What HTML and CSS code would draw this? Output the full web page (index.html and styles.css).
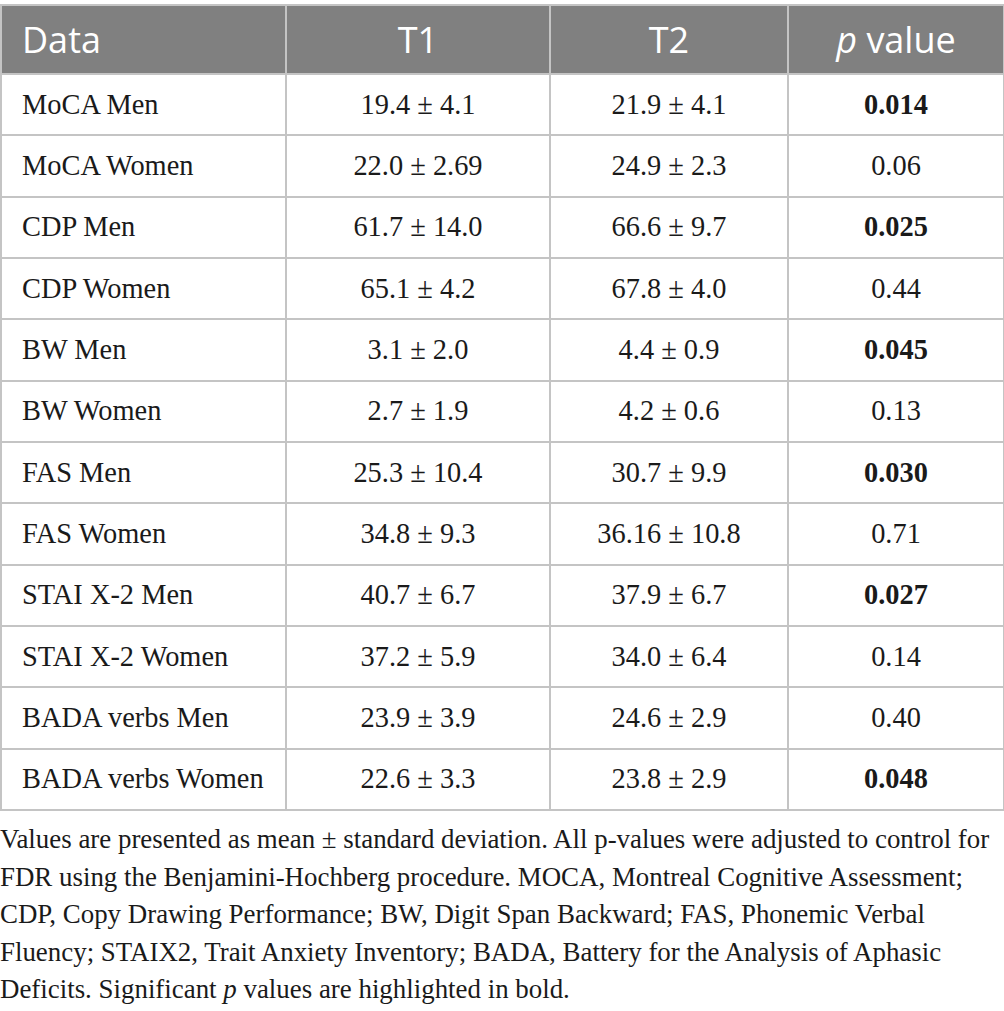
FILE: index.html
```html
<!DOCTYPE html>
<html>
<head>
<meta charset="utf-8">
<link rel="stylesheet" href="styles.css">
</head>
<body>
<table class="data-table">
  <colgroup>
    <col class="c1"><col class="c2"><col class="c3"><col class="c4">
  </colgroup>
  <thead>
    <tr><th class="left">Data</th><th>T1</th><th>T2</th><th><i>p</i> value</th></tr>
  </thead>
  <tbody>
    <tr><td class="left">MoCA Men</td><td>19.4 ± 4.1</td><td>21.9 ± 4.1</td><td><b>0.014</b></td></tr>
    <tr><td class="left">MoCA Women</td><td>22.0 ± 2.69</td><td>24.9 ± 2.3</td><td>0.06</td></tr>
    <tr><td class="left">CDP Men</td><td>61.7 ± 14.0</td><td>66.6 ± 9.7</td><td><b>0.025</b></td></tr>
    <tr><td class="left">CDP Women</td><td>65.1 ± 4.2</td><td>67.8 ± 4.0</td><td>0.44</td></tr>
    <tr><td class="left">BW Men</td><td>3.1 ± 2.0</td><td>4.4 ± 0.9</td><td><b>0.045</b></td></tr>
    <tr><td class="left">BW Women</td><td>2.7 ± 1.9</td><td>4.2 ± 0.6</td><td>0.13</td></tr>
    <tr><td class="left">FAS Men</td><td>25.3 ± 10.4</td><td>30.7 ± 9.9</td><td><b>0.030</b></td></tr>
    <tr><td class="left">FAS Women</td><td>34.8 ± 9.3</td><td>36.16 ± 10.8</td><td>0.71</td></tr>
    <tr><td class="left">STAI X-2 Men</td><td>40.7 ± 6.7</td><td>37.9 ± 6.7</td><td><b>0.027</b></td></tr>
    <tr><td class="left">STAI X-2 Women</td><td>37.2 ± 5.9</td><td>34.0 ± 6.4</td><td>0.14</td></tr>
    <tr><td class="left">BADA verbs Men</td><td>23.9 ± 3.9</td><td>24.6 ± 2.9</td><td>0.40</td></tr>
    <tr><td class="left">BADA verbs Women</td><td>22.6 ± 3.3</td><td>23.8 ± 2.9</td><td><b>0.048</b></td></tr>
  </tbody>
</table>
<p class="footnote">Values are presented as mean ± standard deviation. All p-values were adjusted to control for<br>FDR using the Benjamini-Hochberg procedure. MOCA, Montreal Cognitive Assessment;<br>CDP, Copy Drawing Performance; BW, Digit Span Backward; FAS, Phonemic Verbal<br>Fluency; STAIX2, Trait Anxiety Inventory; BADA, Battery for the Analysis of Aphasic<br>Deficits. Significant <i>p</i> values are highlighted in bold.</p>
</body>
</html>
```
FILE: styles.css
```css
html, body {
  margin: 0;
  padding: 0;
  background: #ffffff;
}
body {
  padding-top: 4px;
  font-family: "Liberation Serif", "Times New Roman", serif;
  color: #1a1a1a;
}
.data-table {
  border-collapse: collapse;
  table-layout: fixed;
  width: 1003px;
}
.c1 { width: 285px; }
.c2 { width: 264px; }
.c3 { width: 238px; }
.c4 { width: 216px; }
.data-table th,
.data-table td {
  border: 2px solid #c4c4c4;
  text-align: center;
  padding: 0;
}
.data-table th {
  background: #808080;
  color: #ffffff;
  font-family: "Open Sans", "Liberation Sans", sans-serif;
  font-weight: 400;
  font-size: 36px;
  height: 67px;
}
.data-table td {
  font-size: 28.4px;
  height: 59.33px;
}
.data-table .left {
  text-align: left;
  padding-left: 20px;
}
.data-table b {
  font-weight: 700;
}
.footnote {
  margin: 10px 0 0 0;
  font-size: 26.9px;
  line-height: 37.6px;
  white-space: nowrap;
}
```
